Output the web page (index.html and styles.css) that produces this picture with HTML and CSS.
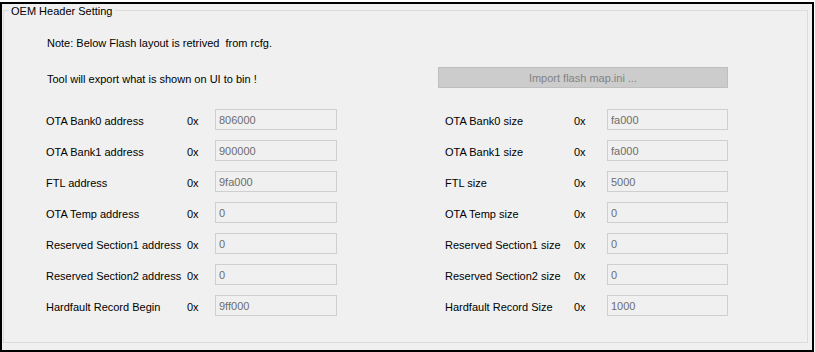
FILE: index.html
```html
<!DOCTYPE html>
<html lang="en">

<head>
    <meta charset="UTF-8">
    <title>OEM Header Setting</title>
    <link rel="stylesheet" href="styles.css">
</head>

<body>
    <div class="window">
        <div class="group">
            <span class="legend">OEM Header Setting</span>
            <div class="note">Note: Below Flash layout is retrived&nbsp; from rcfg.</div>
            <div class="export_row">
                <span class="export_text">Tool will export what is shown on UI to bin !</span>
                <button class="import_btn" disabled>Import flash map.ini ...</button>
            </div>
            <div class="fields">
                <div class="col col-left">
                    <span class="lbl">OTA Bank0 address</span><span class="hex">0x</span><input class="val" value="806000" readonly>
                    <span class="lbl">OTA Bank1 address</span><span class="hex">0x</span><input class="val" value="900000" readonly>
                    <span class="lbl">FTL address</span><span class="hex">0x</span><input class="val" value="9fa000" readonly>
                    <span class="lbl">OTA Temp address</span><span class="hex">0x</span><input class="val" value="0" readonly>
                    <span class="lbl">Reserved Section1 address</span><span class="hex">0x</span><input class="val" value="0" readonly>
                    <span class="lbl">Reserved Section2 address</span><span class="hex">0x</span><input class="val" value="0" readonly>
                    <span class="lbl">Hardfault Record Begin</span><span class="hex">0x</span><input class="val" value="9ff000" readonly>
                </div>
                <div class="col col-right">
                    <span class="lbl">OTA Bank0 size</span><span class="hex">0x</span><input class="val" value="fa000" readonly>
                    <span class="lbl">OTA Bank1 size</span><span class="hex">0x</span><input class="val" value="fa000" readonly>
                    <span class="lbl">FTL size</span><span class="hex">0x</span><input class="val" value="5000" readonly>
                    <span class="lbl">OTA Temp size</span><span class="hex">0x</span><input class="val" value="0" readonly>
                    <span class="lbl">Reserved Section1 size</span><span class="hex">0x</span><input class="val" value="0" readonly>
                    <span class="lbl">Reserved Section2 size</span><span class="hex">0x</span><input class="val" value="0" readonly>
                    <span class="lbl">Hardfault Record Size</span><span class="hex">0x</span><input class="val" value="1000" readonly>
                </div>
            </div>
        </div>
    </div>
</body>

</html>
```

FILE: styles.css
```css
body {
    margin: 0;
    background: #ffffff;
    font-family: 'Liberation Sans', Arial, sans-serif;
    font-size: 11px;
    color: #000000;
}

.window {
    box-sizing: border-box;
    width: 814px;
    height: 350px;
    margin-top: 2px;
    border: 2px solid #000000;
    background: #f0f0f0;
    padding-top: 6px;
    padding-left: 1px;
}

.group {
    position: relative;
    box-sizing: border-box;
    width: 805px;
    height: 333px;
    border: 1px solid #dcdcdc;
    padding: 25px 0 0 42px;
}

.legend {
    position: absolute;
    top: -7px;
    left: 5px;
    padding: 0 2px;
    background: #f0f0f0;
    line-height: 14px;
}

.note {
    line-height: 14px;
    margin-left: 1px;
}

.export_row {
    display: flex;
    justify-content: space-between;
    align-items: center;
    width: 682px;
    margin-top: 17px;
}

.export_text {
    margin-left: 1px;
    padding-top: 3px;
}

.import_btn {
    box-sizing: border-box;
    width: 290px;
    height: 21px;
    border: 1px solid #bfbfbf;
    background: #cccccc;
    color: #838383;
    font-family: 'Liberation Sans', Arial, sans-serif;
    font-size: 11px;
    padding: 0;
}

.fields {
    display: flex;
    gap: 108px;
    margin-top: 21px;
}

.col {
    display: grid;
    grid-auto-rows: 21px;
    row-gap: 10px;
    align-items: center;
}

.col-left {
    grid-template-columns: 141px 28px 122px;
}

.col-right {
    grid-template-columns: 129px 33px 121px;
}

.lbl,
.hex {
    white-space: nowrap;
    padding-top: 2px;
}

.val {
    box-sizing: border-box;
    width: 100%;
    height: 21px;
    margin: 0;
    padding: 1px 0 0 3px;
    border: 1px solid #cfcfcf;
    background: #f0f0f0;
    color: #6d6d6d;
    font-family: 'Liberation Sans', Arial, sans-serif;
    font-size: 11px;
    outline: none;
}
```
